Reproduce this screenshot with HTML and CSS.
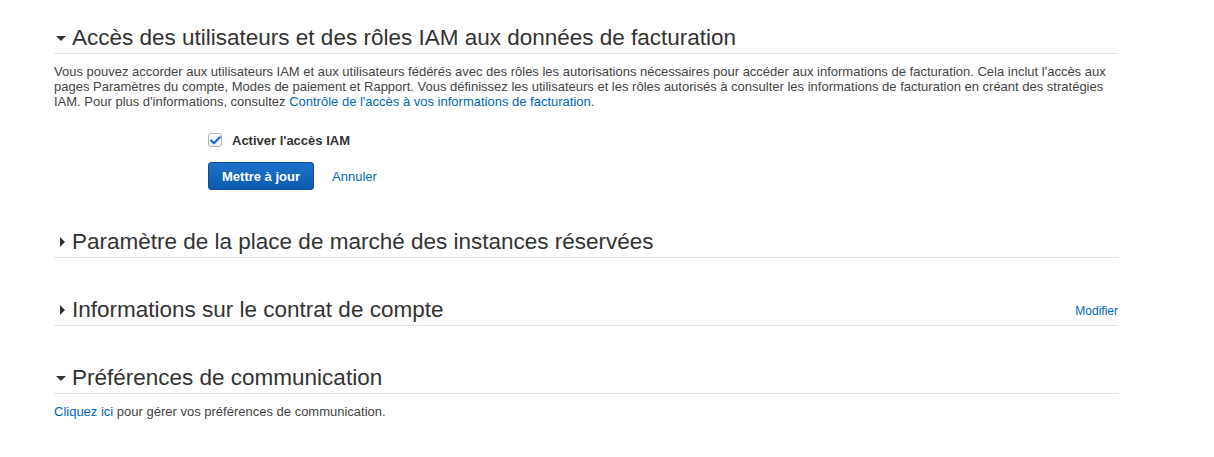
FILE: index.html
```html
<!DOCTYPE html>
<html lang="fr">
<head>
<meta charset="utf-8">
<link rel="stylesheet" href="styles.css">
</head>
<body>
<div class="page">
  <section class="sec sec-first">
    <h2 class="sec-head"><span class="caret caret-down"></span><span class="sec-title">Accès des utilisateurs et des rôles IAM aux données de facturation</span></h2>
    <p class="desc">Vous pouvez accorder aux utilisateurs IAM et aux utilisateurs fédérés avec des rôles les autorisations nécessaires pour accéder aux informations de facturation. Cela inclut l'accès aux pages Paramètres du compte, Modes de paiement et Rapport. Vous définissez les utilisateurs et les rôles autorisés à consulter les informations de facturation en créant des stratégies IAM. Pour plus d'informations, consultez <a class="link" href="#">Contrôle de l'accès à vos informations de facturation</a>.</p>
    <div class="form">
      <label class="check-row">
        <span class="checkbox"><svg width="11" height="9" viewBox="0 0 11 9"><path d="M1.2 4.6 L4 7.3 L9.8 1.3" fill="none" stroke="#1a73c7" stroke-width="2.2" stroke-linecap="round" stroke-linejoin="round"/></svg></span>
        <span class="check-label">Activer l'accès IAM</span>
      </label>
      <div class="actions">
        <button class="btn-primary">Mettre à jour</button>
        <a class="link cancel" href="#">Annuler</a>
      </div>
    </div>
  </section>

  <section class="sec">
    <h2 class="sec-head"><span class="caret caret-right"></span><span class="sec-title">Paramètre de la place de marché des instances réservées</span></h2>
  </section>

  <section class="sec">
    <h2 class="sec-head"><span class="caret caret-right"></span><span class="sec-title">Informations sur le contrat de compte</span><a class="link edit" href="#">Modifier</a></h2>
  </section>

  <section class="sec">
    <h2 class="sec-head"><span class="caret caret-down"></span><span class="sec-title">Préférences de communication</span></h2>
    <p class="desc"><a class="link" href="#">Cliquez ici</a> pour gérer vos préférences de communication.</p>
  </section>
</div>
</body>
</html>
```

FILE: styles.css
```css
* { box-sizing: border-box; }
html, body { margin: 0; padding: 0; background: #fff; }
body {
  font-family: "Liberation Sans", Arial, sans-serif;
  color: #444;
  font-size: 13px;
}
.page {
  width: 1118px;
  padding-left: 54px;
  padding-top: 24px;
}
.sec { margin-top: 38px; }
.sec-first { margin-top: 0; }
.sec-head {
  margin: 0;
  display: flex;
  align-items: center;
  font-weight: normal;
  font-size: 22.5px;
  line-height: 28px;
  height: 30px;
  color: #333;
  border-bottom: 1px solid #e3e3e3;
  padding-bottom: 1px;
}
.sec-title { flex: 1; }
.caret {
  display: inline-block;
  width: 18px;
  position: relative;
  height: 28px;
}
.caret-down::before {
  content: "";
  position: absolute;
  left: 2px;
  top: 12px;
  border-left: 5px solid transparent;
  border-right: 5px solid transparent;
  border-top: 5px solid #333;
}
.caret-right::before {
  content: "";
  position: absolute;
  left: 6px;
  top: 9px;
  border-top: 5px solid transparent;
  border-bottom: 5px solid transparent;
  border-left: 5px solid #333;
}
.edit {
  font-size: 12px;
  line-height: 15px;
  align-self: center;
  margin-top: 3px;
}
.link { color: #0066c0; text-decoration: none; }
.desc {
  margin: 10px 0 0;
  line-height: 15px;
  color: #444;
}
.form { padding-left: 154px; margin-top: 23px; }
.check-row {
  display: flex;
  align-items: center;
  gap: 10px;
  height: 16px;
}
.checkbox {
  width: 14px;
  height: 14px;
  border: 1px solid #b5b5b5;
  border-radius: 3px;
  background: linear-gradient(#fff, #ededed);
  display: flex;
  align-items: center;
  justify-content: center;
}
.check-label { font-weight: bold; color: #333; }
.actions {
  display: flex;
  align-items: center;
  gap: 18px;
  margin-top: 14px;
}
.btn-primary {
  font-family: "Liberation Sans", Arial, sans-serif;
  font-weight: bold;
  font-size: 13px;
  color: #fff;
  height: 28px;
  padding: 0 13px;
  border: 1px solid #0e4f95;
  border-radius: 3px;
  background: linear-gradient(#1d73c9, #0a5bb0);
  cursor: pointer;
}
.cancel { line-height: 15px; }
```
